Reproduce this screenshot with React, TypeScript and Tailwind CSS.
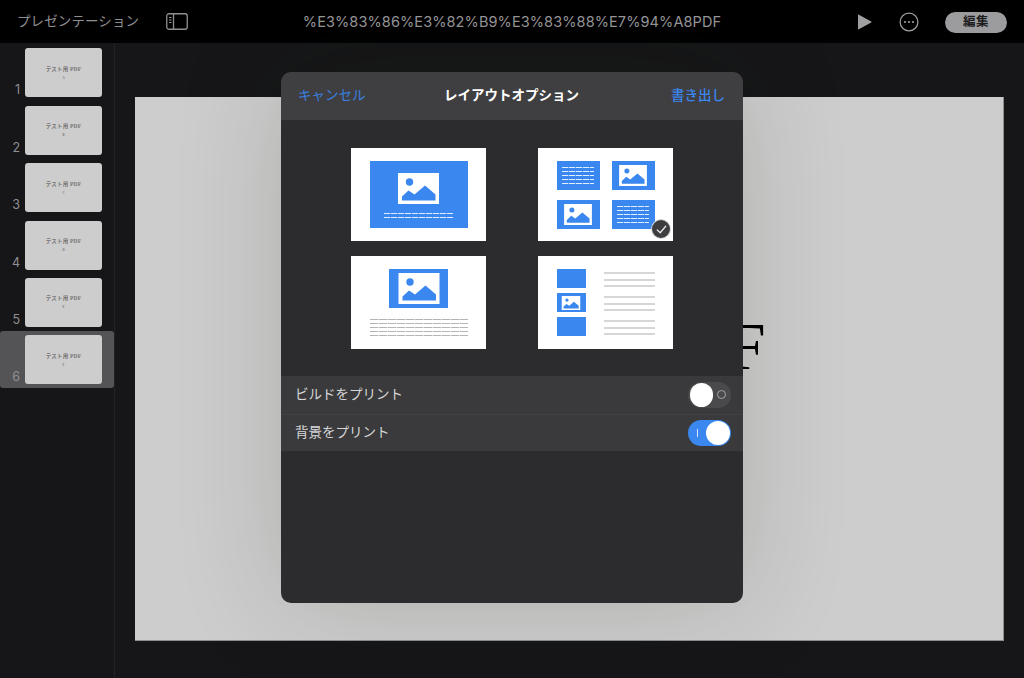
const jp = "font-['Inter','Noto_Sans_CJK_JP',sans-serif]";

function Glyph({ className, fill = "#3b87f0" }: { className: string; fill?: string }) {
  return (
    <svg viewBox="0 0 41 31" className={className} aria-hidden="true">
      <rect width="41" height="31" fill="#ffffff" />
      <circle cx="11.5" cy="9" r="3.7" fill={fill} />
      <path d="M4 27.5V23.5L10.5 17.5L16.5 21.5L27 12.5L37.5 21.5V27.5Z" fill={fill} />
    </svg>
  );
}

function Lines({ count, className, lineClass, gap }: { count: number; className: string; lineClass: string; gap: string }) {
  return (
    <div className={`flex flex-col ${gap} ${className}`}>
      {Array.from({ length: count }, (_, i) => (
        <div key={i} className={lineClass} />
      ))}
    </div>
  );
}

const whiteDash = "h-px bg-[repeating-linear-gradient(90deg,#ffffff_0_6px,rgba(255,255,255,0.3)_6px_7px)] opacity-85";
const greyDash = "h-px bg-[repeating-linear-gradient(90deg,#b4b4b4_0_8px,#e2e2e2_8px_9px)]";

function Thumb({ children, className = "" }: { children: React.ReactNode; className?: string }) {
  return <div className={`relative w-[135px] h-[93px] bg-white ${className}`}>{children}</div>;
}

function LayoutOne() {
  return (
    <Thumb className="flex items-center justify-center">
      <div className="w-[98px] h-[67px] bg-[#3b87f0] flex flex-col items-center pt-[12px]">
        <Glyph className="w-[41px] h-[31px]" />
        <Lines count={2} gap="gap-[3px]" className="w-[69px] mt-[9px]" lineClass={whiteDash} />
      </div>
    </Thumb>
  );
}

function TextCard() {
  return (
    <div className="w-[43px] h-[29px] bg-[#3b87f0] flex items-center justify-center">
      <Lines count={5} gap="gap-[3px]" className="w-[32px]" lineClass={whiteDash} />
    </div>
  );
}

function ImageCard() {
  return (
    <div className="w-[43px] h-[29px] bg-[#3b87f0] flex items-center justify-center">
      <Glyph className="w-[30px] h-[21px]" />
    </div>
  );
}

function LayoutTwo() {
  return (
    <Thumb className="pt-[13px] pl-[18.5px]">
      <div className="grid grid-cols-[43px_43px] gap-x-[12px] gap-y-[9.5px]">
        <TextCard />
        <ImageCard />
        <ImageCard />
        <TextCard />
      </div>
      <div className="absolute left-[113px] top-[71px] w-[20px] h-[20px] rounded-full bg-[#3d3d3f] border border-white/80 flex items-center justify-center">
        <svg viewBox="0 0 14 14" className="w-[13px] h-[13px]" aria-hidden="true">
          <path d="M2.5 7.5L5.6 10.5L11.5 3.5" fill="none" stroke="#e8e8e8" strokeWidth="1.4" strokeLinecap="round" strokeLinejoin="round" />
        </svg>
      </div>
    </Thumb>
  );
}

function LayoutThree() {
  return (
    <Thumb className="flex flex-col items-center pt-[13px]">
      <div className="w-[59px] h-[39px] bg-[#3b87f0] flex items-center justify-center">
        <Glyph className="w-[42px] h-[31px]" />
      </div>
      <Lines count={5} gap="gap-[3px]" className="w-[98px] mt-[11px]" lineClass={greyDash} />
    </Thumb>
  );
}

function LayoutFour() {
  return (
    <Thumb className="flex pt-[13px] pl-[18.5px]">
      <div className="flex flex-col gap-[5px] w-[29px]">
        <div className="h-[19px] bg-[#3b87f0]" />
        <div className="h-[19px] bg-[#3b87f0] flex items-center justify-center">
          <Glyph className="w-[20px] h-[14px]" />
        </div>
        <div className="h-[19px] bg-[#3b87f0]" />
      </div>
      <div className="ml-[18px] w-[51px] pt-[3px] flex flex-col gap-[9px]">
        {[0, 1, 2].map((g) => (
          <Lines key={g} count={3} gap="gap-[4.5px]" className="" lineClass="h-[2px] bg-[#d6d6d6]" />
        ))}
      </div>
    </Thumb>
  );
}

function Toggle({ on }: { on: boolean }) {
  return (
    <div className={`w-[43px] h-[26px] rounded-full relative flex items-center ${on ? "bg-[#3b87f0] justify-end" : "bg-[#4a4a4d] justify-start"} px-[1.5px]`}>
      {on ? <div className="absolute left-[9px] top-[9px] w-px h-[8px] bg-white/80" /> : <div className="absolute right-[5px] top-[8.5px] w-[9px] h-[9px] rounded-full border border-[#a5a5a7]" />}
      <div className="w-[23.5px] h-[23.5px] rounded-full bg-white" />
    </div>
  );
}

function Row({ label, on, divider }: { label: string; on: boolean; divider?: boolean }) {
  return (
    <div className={`h-[37.5px] bg-[#3a3a3c] flex items-center justify-between pl-[14px] pr-[12px] ${divider ? "border-t border-[#414143]" : ""}`}>
      <span className={`text-[13.5px] -mt-[2px] text-[#d6d6d8] ${jp}`}>{label}</span>
      <Toggle on={on} />
    </div>
  );
}

const pages = ["A", "B", "C", "D", "E", "F"];

export default function App() {
  return (
    <div className={`w-[1024px] h-[678px] overflow-hidden flex flex-col bg-[#161618] ${jp}`}>
      <header className="h-[43px] bg-black grid grid-cols-[1fr_auto_1fr] items-center shrink-0">
        <div className="flex items-center">
          <span className="ml-[17px] text-[13.5px] tracking-[0.1px] text-[#8f8f91]">プレゼンテーション</span>
          <svg viewBox="0 0 22 17" className="ml-[27px] w-[22px] h-[17px]" aria-hidden="true">
            <rect x="0.75" y="0.75" width="20.5" height="15.5" rx="2.2" fill="none" stroke="#8f8f91" strokeWidth="1.3" />
            <path d="M7.5 1V16" stroke="#8f8f91" strokeWidth="1.3" />
            <path d="M3 4.5H5.5M3 7H5.5M3 9.5H5.5" stroke="#8f8f91" strokeWidth="1" />
          </svg>
        </div>
        <span className="text-[14.5px] tracking-[0.1px] text-[#98989a]">%E3%83%86%E3%82%B9%E3%83%88%E7%94%A8PDF</span>
        <div className="flex items-center justify-end">
          <svg viewBox="0 0 15 16" className="w-[15px] h-[16px] mr-[27px]" aria-hidden="true">
            <path d="M1 1.2V14.8a.6.6 0 0 0 .9.5L14.2 8.5a.6.6 0 0 0 0-1L1.9.7A.6.6 0 0 0 1 1.2Z" fill="#a0a0a2" />
          </svg>
          <svg viewBox="0 0 20 20" className="w-[20px] h-[20px] mr-[26.5px]" aria-hidden="true">
            <circle cx="10" cy="10" r="8.9" fill="none" stroke="#a0a0a2" strokeWidth="1.2" />
            <circle cx="6" cy="10" r="1.1" fill="#a0a0a2" />
            <circle cx="10" cy="10" r="1.1" fill="#a0a0a2" />
            <circle cx="14" cy="10" r="1.1" fill="#a0a0a2" />
          </svg>
          <div className="w-[62px] h-[21px] mr-[17px] mt-[1px] rounded-full bg-[#9c9c9e] flex items-center justify-center text-[12.5px] font-semibold tracking-[0.5px] text-[#1c1c1e]">編集</div>
        </div>
      </header>

      <div className="flex-1 flex min-h-0 relative">
        <aside className="w-[115px] shrink-0 border-r border-[#232325] pt-px">
          {pages.map((p, i) => (
            <div key={p} className={`h-[57.4px] flex items-end pb-[4px] rounded-[3px] ${i === 5 ? "bg-[#545456]" : ""}`}>
              <span className="w-[21px] pr-[1px] text-right text-[12.5px] leading-[14px] text-[#8f8f91]">{i + 1}</span>
              <div className="ml-[4px] w-[77px] h-[49px] rounded-[3px] bg-[#cdcdcd] flex flex-col items-center justify-center gap-[5px] text-[#747474] font-['Liberation_Serif','Noto_Sans_CJK_JP',serif]">
                <span className="text-[5.5px] leading-[6px] font-bold tracking-[0.2px]">テスト用 PDF</span>
                <span className="text-[3px] leading-[3px] font-bold">{p}</span>
              </div>
            </div>
          ))}
        </aside>

        <main className="flex-1 pl-[20px] pr-[20px] pt-[54px]">
          <div className="w-[869px] h-[544px] bg-[#cdcdcd] border-r border-b border-[#8f8f8f] flex flex-col items-center pt-[204px] text-black font-['Liberation_Serif','Noto_Sans_CJK_JP',serif]">
            <span className="text-[68px] leading-[90px] tracking-[-3.4px] whitespace-nowrap">テスト用 PDF</span>
            <span className="text-[24px]">F</span>
          </div>
        </main>

        <section className="absolute left-[281px] top-[29px] w-[462px] h-[531px] rounded-[10px] overflow-hidden bg-[#2c2c2e] shadow-[0_0_110px_rgba(20,30,10,0.16)] flex flex-col">
          <div className="h-[48px] pb-[2px] bg-[#3f3f41] grid grid-cols-[1fr_auto_1fr] items-center pl-[17px] pr-[18px] shrink-0">
            <span className="text-[13.5px] text-[#3a7fe0]">キャンセル</span>
            <span className="text-[13.5px] font-semibold text-white">レイアウトオプション</span>
            <span className="text-[13.5px] font-medium text-right text-[#3b87f0]">書き出し</span>
          </div>
          <div className="grid grid-cols-[135px_135px] gap-x-[52px] gap-y-[15px] pl-[70px] pt-[28px]">
            <LayoutOne />
            <LayoutTwo />
            <LayoutThree />
            <LayoutFour />
          </div>
          <div className="mt-[27px] flex flex-col">
            <Row label="ビルドをプリント" on={false} />
            <Row label="背景をプリント" on={true} divider />
          </div>
        </section>
      </div>
    </div>
  );
}
